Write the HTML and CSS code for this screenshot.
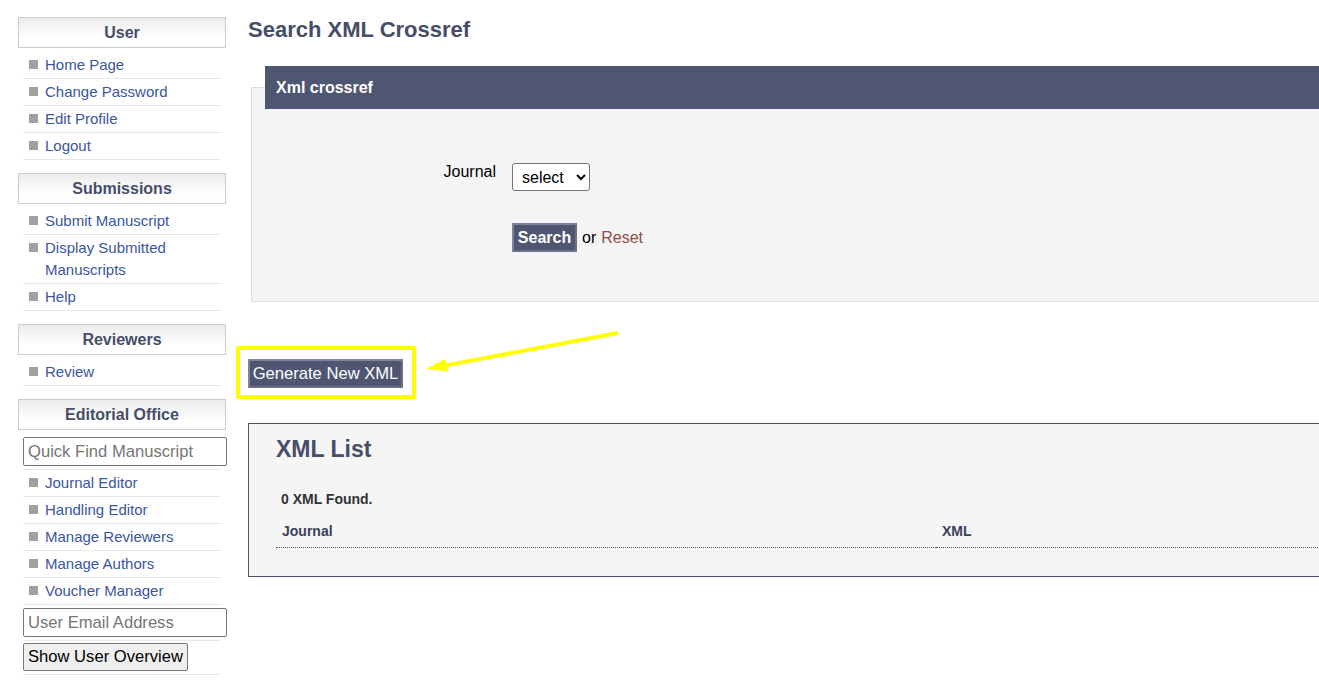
FILE: index.html
```html
<!DOCTYPE html>
<html lang="en">
<head>
    <meta charset="UTF-8">
    <meta name="viewport" content="width=device-width, initial-scale=1.0">
    <title>Search XML Crossref</title>
    <link rel="stylesheet" href="styles.css">
</head>
<body>

<div class="page">
    <aside class="sidebar">
        <div class="side-box">
            <h3 class="side-title">User</h3>
            <ul class="side-menu">
                <li><a href="#">Home Page</a></li>
                <li><a href="#">Change Password</a></li>
                <li><a href="#">Edit Profile</a></li>
                <li><a href="#">Logout</a></li>
            </ul>
        </div>

        <div class="side-box">
            <h3 class="side-title">Submissions</h3>
            <ul class="side-menu">
                <li><a href="#">Submit Manuscript</a></li>
                <li><a href="#">Display Submitted Manuscripts</a></li>
                <li><a href="#">Help</a></li>
            </ul>
        </div>

        <div class="side-box">
            <h3 class="side-title">Reviewers</h3>
            <ul class="side-menu">
                <li><a href="#">Review</a></li>
            </ul>
        </div>

        <div class="side-box">
            <h3 class="side-title">Editorial Office</h3>
            <ul class="side-menu">
                <li class="field-item"><input type="text" class="side-input" placeholder="Quick Find Manuscript"></li>
                <li><a href="#">Journal Editor</a></li>
                <li><a href="#">Handling Editor</a></li>
                <li><a href="#">Manage Reviewers</a></li>
                <li><a href="#">Manage Authors</a></li>
                <li><a href="#">Voucher Manager</a></li>
                <li class="field-item"><input type="text" class="side-input" placeholder="User Email Address"></li>
                <li class="button-item"><button type="button" class="side-button">Show User Overview</button></li>
            </ul>
        </div>
    </aside>

    <main class="content">
        <h1 class="page-title">Search XML Crossref</h1>

        <div class="search-panel">
            <div class="panel-head">Xml crossref</div>
            <form class="search-form">
                <div class="form-row">
                    <label class="form-label">Journal</label>
                    <select class="form-select">
                        <option>select</option>
                    </select>
                </div>
                <div class="form-row">
                    <span class="form-label"></span>
                    <div class="form-actions">
                        <button type="button" class="btn-dark btn-bold">Search</button>
                        <span>or</span>
                        <a href="#" class="reset-link">Reset</a>
                    </div>
                </div>
            </form>
        </div>

        <div class="generate-wrap">
            <button type="button" class="btn-dark">Generate New XML</button>
            <span class="highlight"></span>
            <svg class="arrow" width="205" height="46" viewBox="0 0 205 46">
                <line x1="200" y1="4" x2="28" y2="36.4" stroke="#ffff00" stroke-width="4"/>
                <polygon points="8,40 30,42.6 27.4,30" fill="#ffff00"/>
            </svg>
        </div>

        <div class="list-panel">
            <h2 class="list-title">XML List</h2>
            <p class="list-count">0 XML Found.</p>
            <table class="xml-table">
                <thead>
                    <tr>
                        <th class="col-journal">Journal</th>
                        <th>XML</th>
                    </tr>
                </thead>
            </table>
        </div>
    </main>
</div>

</body>
</html>
```

FILE: styles.css
```css
html, body {
    overflow: hidden;
}
body {
    margin: 0;
    font-family: 'Liberation Sans', Arial, sans-serif;
    background-color: #ffffff;
    color: #000;
}
.page {
    display: flex;
    align-items: flex-start;
    gap: 22px;
    padding: 17px 0 0 18px;
}

/* sidebar */
.sidebar {
    width: 208px;
    flex: none;
}
.side-box + .side-box {
    margin-top: 13px;
}
.side-title {
    margin: 0;
    height: 29px;
    line-height: 29px;
    border: 1px solid #cccccc;
    background: linear-gradient(#ececec, #ffffff 70%);
    color: #464d69;
    font-size: 16px;
    font-weight: bold;
    text-align: center;
}
.side-menu {
    list-style: none;
    margin: 0;
    padding: 4px 0 0;
}
.side-menu li {
    display: flex;
    align-items: flex-start;
    margin: 0 5px;
    padding: 2px 0 2px 6px;
    line-height: 22px;
    font-size: 15px;
    border-bottom: 1px solid #e8e8e8;
}
.side-menu li::before {
    content: "";
    flex: none;
    width: 9px;
    height: 9px;
    margin: 6px 7px 0 0;
    background-color: #a0a0a0;
}
.side-menu li.field-item,
.side-menu li.button-item {
    padding: 3px 0;
}
.side-menu li.button-item {
    padding-top: 2px;
}
.side-menu li.field-item::before,
.side-menu li.button-item::before {
    display: none;
}
.side-menu a {
    color: #3a56a0;
    text-decoration: none;
}
.side-input {
    width: 204px;
    height: 29px;
    box-sizing: border-box;
    margin: 0;
    padding: 0 4px;
    border: 1px solid #767676;
    border-radius: 2px;
    font-family: inherit;
    font-size: 16.6px;
}
.side-input::placeholder {
    color: #757575;
}
.side-button {
    height: 28px;
    margin: 0;
    padding: 0 4px;
    border: 1px solid #767676;
    border-radius: 2px;
    background-color: #efefef;
    font-family: inherit;
    font-size: 16.6px;
    color: #000;
}

/* main area */
.content {
    flex: none;
    width: 1420px;
}
.page-title {
    margin: 0;
    font-size: 22px;
    line-height: 25px;
    color: #464d69;
}
.search-panel {
    margin: 45px 0 0 3px;
    border: 1px solid #dddddd;
    background-color: #f4f4f4;
}
.panel-head {
    margin: -22px 0 0 13px;
    height: 43px;
    line-height: 43px;
    padding: 0 11px;
    background-color: #4f5671;
    color: #ffffff;
    font-size: 16px;
    font-weight: bold;
}
.search-form {
    padding: 54px 0 49px;
}
.form-row {
    display: flex;
    align-items: flex-start;
    gap: 16px;
    font-size: 16px;
}
.form-row + .form-row {
    margin-top: 32px;
}
.form-label {
    width: 244px;
    text-align: right;
    line-height: 18px;
}
.form-select {
    width: 78px;
    height: 28px;
    padding: 0 0 0 5px;
    border: 1px solid #767676;
    border-radius: 3px;
    background-color: #ffffff;
    font-family: inherit;
    font-size: 16px;
    color: #000;
}
.form-actions {
    display: flex;
    align-items: center;
    gap: 5px;
}
.btn-dark {
    height: 29px;
    margin: 0;
    padding: 0 3px;
    border: 2px solid #6c7188;
    border-top-color: #7f8499;
    border-left-color: #7f8499;
    background-color: #4f5671;
    color: #ffffff;
    font-family: inherit;
    font-size: 16px;
}
.btn-bold {
    width: 65px;
    font-weight: bold;
}
.reset-link {
    color: #914c4c;
    text-decoration: none;
}

/* annotation round the generate button */
.generate-wrap {
    position: relative;
    width: 155px;
    margin-top: 57px;
}
.generate-wrap .btn-dark {
    width: 155px;
    display: block;
    font-size: 16.6px;
    padding: 0;
}
.highlight {
    position: absolute;
    left: -12px;
    top: -13px;
    width: 180px;
    height: 53px;
    box-sizing: border-box;
    border: 4px solid #ffff00;
    border-radius: 2px;
}
.arrow {
    position: absolute;
    left: 170px;
    top: -30px;
}

.list-panel {
    margin-top: 35px;
    padding: 12px 0 28px 27px;
    border: 1px solid #4f5671;
    background-color: #f5f5f5;
}
.list-title {
    margin: 0;
    font-size: 23px;
    line-height: 26px;
    color: #464d69;
}
.list-count {
    margin: 29px 0 0 5px;
    font-size: 14px;
    line-height: 16px;
    font-weight: bold;
    color: #333;
}
.xml-table {
    margin-top: 10px;
    border-collapse: collapse;
    width: 1340px;
}
.xml-table th {
    padding: 6px 6px 8px;
    font-size: 14px;
    line-height: 16px;
    text-align: left;
    color: #3b4159;
    border-bottom: 1px dotted #555;
}
.xml-table .col-journal {
    width: 648px;
}
```
